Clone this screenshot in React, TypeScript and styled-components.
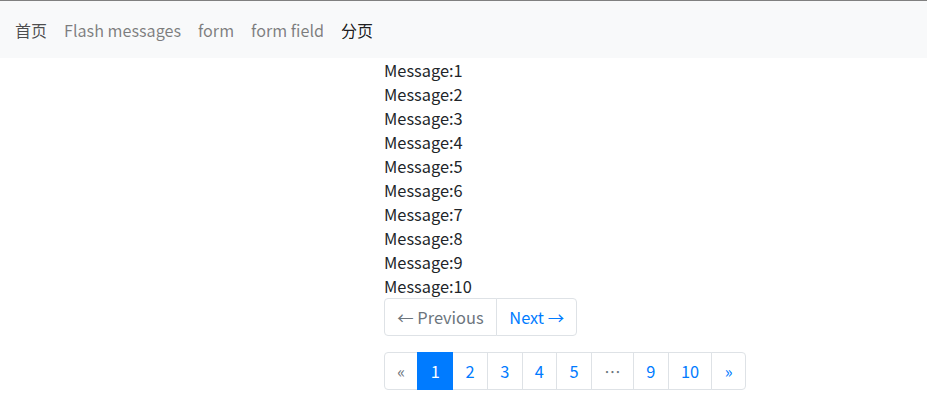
import React from 'react';
import styled, { createGlobalStyle } from 'styled-components';

const GlobalStyle = createGlobalStyle`
  * { box-sizing: border-box; }
  body {
    margin: 0;
    font-family: "Noto Sans CJK SC", "Noto Sans", sans-serif;
    font-size: 16.4px;
    line-height: 24px;
    color: #212529;
    background: #fff;
  }
  ul { margin: 0; padding: 0; list-style: none; }
`;

const Navbar = styled.nav`
  display: flex;
  align-items: center;
  gap: 17px;
  height: 58px;
  padding: 0 15px;
  background: #f8f9fa;
  border-top: 1px solid #808080;
`;

const NavLink = styled.a<{ $tone: 'brand' | 'muted' | 'active' }>`
  text-decoration: none;
  font-size: ${p => (p.$tone === 'muted' ? '16.15px' : '16px')};
  color: ${p =>
    p.$tone === 'brand' ? 'rgba(0, 0, 0, 0.7)' : p.$tone === 'active' ? 'rgba(0, 0, 0, 0.9)' : 'rgba(0, 0, 0, 0.5)'};
  cursor: pointer;
`;

const Main = styled.main`
  padding-left: 384px;
`;

const MessageList = styled.div`
  display: flex;
  flex-direction: column;
`;

const Message = styled.div`
  height: 24px;
`;

const Pager = styled.ul`
  display: inline-flex;
  margin-bottom: 16px;
  border-radius: 4px;
`;

const PageRow = styled.div`
  display: flex;
`;

const PageItem = styled.li<{ $active?: boolean; $disabled?: boolean }>`
  display: block;
  padding: 6px 12.3px;
  line-height: 24px;
  margin-left: -1px;
  border: 1px solid ${p => (p.$active ? '#007bff' : '#dee2e6')};
  background: ${p => (p.$active ? '#007bff' : '#fff')};
  color: ${p => (p.$active ? '#fff' : p.$disabled ? '#6c757d' : '#007bff')};
  position: relative;
  z-index: ${p => (p.$active ? 1 : 0)};
  cursor: pointer;

  &:first-child {
    margin-left: 0;
    border-top-left-radius: 4px;
    border-bottom-left-radius: 4px;
  }
  &:last-child {
    border-top-right-radius: 4px;
    border-bottom-right-radius: 4px;
  }
`;

const pages: { label: string; active?: boolean; disabled?: boolean }[] = [
  { label: '«', disabled: true },
  { label: '1', active: true },
  { label: '2' },
  { label: '3' },
  { label: '4' },
  { label: '5' },
  { label: '…', disabled: true },
  { label: '9' },
  { label: '10' },
  { label: '»' },
];

export default function App() {
  const messages = Array.from({ length: 10 }, (_, i) => i + 1);
  return (
    <>
      <GlobalStyle />
      <Navbar>
        <NavLink $tone="brand">首页</NavLink>
        <NavLink $tone="muted">Flash messages</NavLink>
        <NavLink $tone="muted">form</NavLink>
        <NavLink $tone="muted">form field</NavLink>
        <NavLink $tone="active">分页</NavLink>
      </Navbar>
      <Main>
        <MessageList>
          {messages.map(n => (
            <Message key={n}>Message:{n}</Message>
          ))}
        </MessageList>
        <PageRow>
          <Pager>
            <PageItem $disabled>← Previous</PageItem>
            <PageItem>Next →</PageItem>
          </Pager>
        </PageRow>
        <PageRow>
          <Pager>
            {pages.map((p, i) => (
              <PageItem key={i} $active={p.active} $disabled={p.disabled}>
                {p.label}
              </PageItem>
            ))}
          </Pager>
        </PageRow>
      </Main>
    </>
  );
}
